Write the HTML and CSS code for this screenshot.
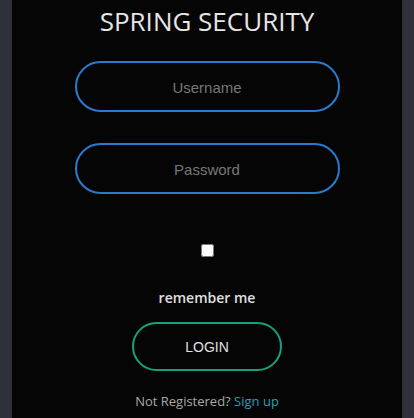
FILE: index.html
```html
<!DOCTYPE html>
<html>
<head>
<meta charset="utf-8">
<link rel="stylesheet" href="styles.css">
</head>
<body>
<div class="panel">
  <h1 class="title">SPRING SECURITY</h1>
  <form class="form">
    <input class="field" type="text" placeholder="Username">
    <input class="field" type="password" placeholder="Password">
    <input class="check" type="checkbox" id="remember">
    <label class="remember" for="remember">remember me</label>
    <button class="login" type="button">LOGIN</button>
    <p class="signup">Not Registered? <a href="#">Sign up</a></p>
  </form>
</div>
</body>
</html>
```
FILE: styles.css
```css
html, body {
  margin: 0;
  padding: 0;
  height: 100%;
}
body {
  background: #2f313a;
  font-family: "Open Sans", sans-serif;
}
.panel {
  width: 390px;
  margin: 0 auto;
  min-height: 100%;
  background: #050505;
  overflow: hidden;
}
.title {
  margin: 4px 0 0;
  text-align: center;
  color: #e6e6e6;
  font-size: 26px;
  font-weight: 400;
  line-height: 34px;
}
.form {
  display: flex;
  flex-direction: column;
  align-items: center;
}
.field {
  box-sizing: border-box;
  width: 265px;
  height: 51px;
  margin-top: 23px;
  padding: 2px 0 0;
  border: 2px solid #2c7ad0;
  border-radius: 26px;
  background: transparent;
  text-align: center;
  font-family: "Liberation Sans", Arial, sans-serif;
  font-size: 15px;
  color: #ddd;
  outline: none;
}
.field + .field {
  margin-top: 31px;
}
.field::placeholder {
  color: #777;
}
.check {
  margin: 50px 0 0;
  width: 13px;
  height: 13px;
}
.remember {
  margin-top: 31px;
  color: #e0e0e0;
  font-size: 14px;
  font-weight: 600;
  line-height: 20px;
}
.login {
  box-sizing: border-box;
  width: 150px;
  height: 49px;
  margin-top: 14px;
  border: 2px solid #16a07e;
  border-radius: 25px;
  background: transparent;
  color: #e0e0e0;
  font-family: "Liberation Sans", Arial, sans-serif;
  font-size: 14px;
}
.signup {
  margin: 20px 0 0;
  color: #aaa;
  font-size: 13px;
  line-height: 20px;
}
.signup a {
  color: #1fa3b5;
  text-decoration: none;
}
```
